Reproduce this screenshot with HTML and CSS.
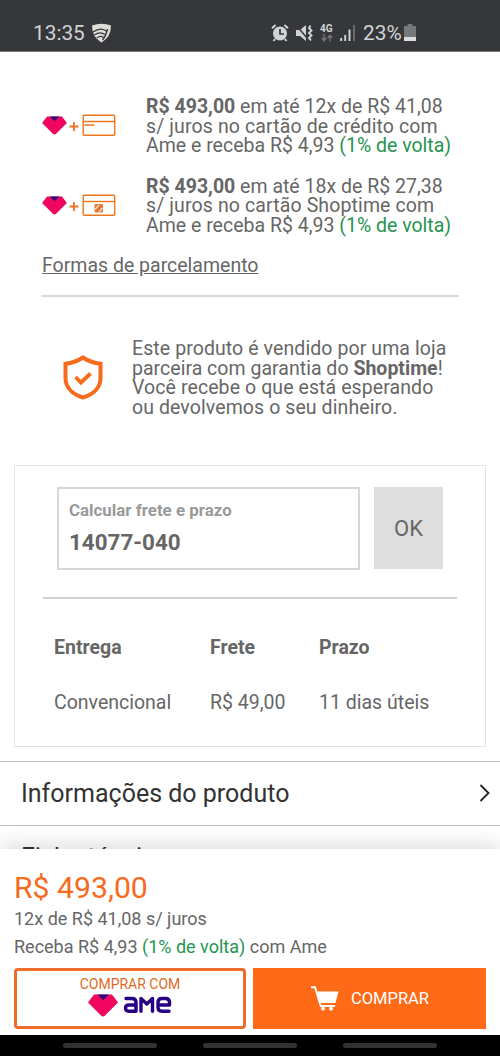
FILE: index.html
```html
<!DOCTYPE html>
<html lang="pt-BR">
<head>
<meta charset="utf-8">
<title>Shoptime</title>
<link rel="stylesheet" href="styles.css">
</head>
<body>
<svg class="defs" width="0" height="0" aria-hidden="true">
  <symbol id="gem" viewBox="0 0 30 23"><path d="M6 0.500H24L30 8.500 17 21.500Q15 23.500 13 21.500L0 8.500Z" fill="#f0055f"/><path d="M9.500 .500H21L15.200 6Z" fill="#2b0a80"/></symbol>
</svg>
<div class="screen">
  <header class="status">
    <span class="clock">13:35</span>
    <svg class="shield-wifi" width="21" height="20" viewBox="0 0 21 20"><path d="M1 2.500Q10.500-1 20 2.500 20 14 10.500 19.500 1 14 1 2.500Z" fill="#deded9"/><g fill="none" stroke="#36373b" stroke-width="1.300"><path d="M2 9Q10 3.500 16 8.500M3.500 12Q9 8 14 11.500M6 15Q9.500 12 12.500 14.500M16.500 6Q15 13 11.500 17"/></g></svg>
    <svg class="alarm" width="18" height="18" viewBox="0 0 18 18"><circle cx="9" cy="9.500" r="7" fill="#d2d3d5"/><path d="M1 4.200 4.600 1M17 4.200 13.400 1M4 15 2.500 17M14 15l1.500 2" stroke="#d2d3d5" stroke-width="2"/><path d="M9 5v5h4" fill="none" stroke="#36373b" stroke-width="1.700"/></svg>
    <svg class="mute" width="18" height="18" viewBox="0 0 18 18"><path d="M1 6h4l6-5v16l-6-5H1Z" fill="#d2d3d5"/><path d="M1 1 12 14" stroke="#36373b" stroke-width="1.500"/><path d="M15.500 1.500 14 4l2.500 2.500L14 9l2.500 2.500L14 14l2 2.500" fill="none" stroke="#d2d3d5" stroke-width="1.900"/></svg>
    <span class="network"><b>4G</b><svg width="12" height="8" viewBox="0 0 12 8"><path d="M3 0v6M.700 4 3 6.800 5.300 4M9 7.500v-6M6.700 4 9 1.200 11.300 4" fill="none" stroke="#77787c" stroke-width="1.300"/></svg></span>
    <svg class="signal" width="16" height="16" viewBox="0 0 16 16"><path d="M1.200 16v-3M5.200 16v-6M9.500 16V4.500" stroke="#d2d3d5" stroke-width="1.900"/><path d="M14 16V0" stroke="#6c6d71" stroke-width="1.900"/></svg>
    <span class="percent">23%</span>
    <svg class="battery" width="12" height="17" viewBox="0 0 12 17"><path d="M0 2h3.500V0h5v2H12v15H0Z" fill="#77787c"/><path d="M0 13h12v4H0Z" fill="#dedede"/></svg>
  </header>

  <main class="content">
    <section class="payments">
      <div class="payment">
        <svg class="pay-icon" width="75" height="24" viewBox="0 0 75 24"><use href="#gem" x="0" y="2" width="25" height="19"/><path d="M27.500 12.500h9M32 8v9" stroke="#ed741f" stroke-width="1.800"/><g fill="none" stroke="#ed741f" stroke-width="1.400"><rect x="41.200" y="1.200" width="31.500" height="20" rx="1"/><path d="M42 7.500h31M42.500 11h10"/></g></svg>
        <p><b>R$ 493,00</b> em até 12x de R$ 41,08<br><span class="loose">s/ juros no cartão de crédito com</span><br>Ame e receba R$ 4,93 <span class="green">(1% de volta)</span></p>
      </div>
      <div class="payment">
        <svg class="pay-icon" width="75" height="24" viewBox="0 0 75 24"><use href="#gem" x="0" y="2" width="25" height="19"/><path d="M27.500 12.500h9M32 8v9" stroke="#ed741f" stroke-width="1.800"/><g fill="none" stroke="#ed741f" stroke-width="1.400"><rect x="41.200" y="1.200" width="31.500" height="20" rx="1"/><path d="M42 7.500h31"/></g><rect x="52.500" y="10" width="8.500" height="8.500" rx="1" fill="#e07a38"/><path d="m53 15.500 4-4.500M57 18l3.500-4" stroke="#fff" stroke-width="1.100"/></svg>
        <p><b>R$ 493,00</b> em até 18x de R$ 27,38<br><span class="loose">s/ juros no cartão Shoptime com</span><br>Ame e receba R$ 4,93 <span class="green">(1% de volta)</span></p>
      </div>
      <a class="link">Formas de parcelamento</a>
    </section>

    <section class="guarantee">
      <svg width="40" height="45" viewBox="0 0 40 45"><path d="M20 2.500C15 6 9 8 2.500 8.800V23C2.500 33 10 39.500 20 42.500 30 39.500 37.500 33 37.500 23V8.800C31 8 25 6 20 2.500Z" fill="none" stroke="#f76b1c" stroke-width="4"/><path d="m12.500 22 5.500 5.500 9.500-9" fill="none" stroke="#f76b1c" stroke-width="3.800"/></svg>
      <p>Este produto é vendido por uma loja<br><span class="tight">parceira com garantia do <b>Shoptime</b>!</span><br>Você recebe o que está esperando<br>ou devolvemos o seu dinheiro.</p>
    </section>

    <section class="shipping">
      <form class="zip">
        <label class="field"><span class="caption">Calcular frete e prazo</span><span class="value">14077-040</span></label>
        <button class="ok" type="button">OK</button>
      </form>
      <div class="rates">
        <b>Entrega</b><b>Frete</b><b>Prazo</b>
        <span>Convencional</span><span>R$ 49,00</span><span>11 dias úteis</span>
      </div>
    </section>

    <section class="accordion">
      <div class="item"><span class="info">Informações do produto</span><svg width="12" height="18" viewBox="0 0 12 18"><path d="m1.500 1 8 8-8 8" fill="none" stroke="#222" stroke-width="1.800"/></svg></div>
      <div class="item next"><span>Ficha técnica</span></div>
    </section>
  </main>

  <footer class="buybar">
    <div class="price">R$ 493,00</div>
    <div class="parcel">12x de R$ 41,08 s/ juros</div>
    <div class="cashback">Receba R$ 4,93 <span class="green">(1% de volta)</span> com Ame</div>
    <div class="actions">
      <button class="ame" type="button"><span class="with">COMPRAR COM</span>
        <svg width="84" height="24" viewBox="0 0 84 24" role="img" aria-label="ame"><use href="#gem" x="0" y="0" width="30" height="23"/><g fill="none" stroke="#270085" stroke-width="3.400" stroke-linejoin="round" stroke-linecap="round"><path d="M38 4.500H44Q48 4.500 48 8.500V17.200H41Q37.500 17.200 37.500 14 37.500 11 41 11H47.500M53 17.200V4.500L58.800 10 64.500 4.500V17.200M70 11H81.500V8.500Q81.500 4.500 77.500 4.500H74Q70 4.500 70 8.500V13.200Q70 17.200 74 17.200H81"/></g></svg>
      </button>
      <button class="buy" type="button"><svg width="28" height="25" viewBox="0 0 28 25"><path d="M5.500 5.500H27.500L24.500 17H9.500Z" fill="#fff"/><path d="M0 1.300H4L9.700 20H24" fill="none" stroke="#fff" stroke-width="1.900"/><circle cx="12" cy="22.700" r="1.900" fill="#fff"/><circle cx="20" cy="22.700" r="1.900" fill="#fff"/></svg><span>COMPRAR</span></button>
    </div>
  </footer>
  <nav class="navbar"><i></i><i></i><i></i></nav>
</div>
</body>
</html>
```
FILE: styles.css
```css
* { box-sizing: border-box; }
body { margin: 0; font-family: Roboto, "Liberation Sans", sans-serif; color: #666; background: #fff; }
p { margin: 0; }
button { font: inherit; border: 0; padding: 0; margin: 0; }
svg { display: block; flex: none; }
.defs { position: absolute; }
.green { color: #249451; }
.screen { width: 500px; height: 1056px; display: flex; flex-direction: column; overflow: hidden; }
.status { height: 52px; flex: none; background: #36373b; border-bottom: 1px solid #77787a; padding: 14px 0 0 33px; display: flex; align-items: center; color: #d2d3d5; }
.clock { font-size: 20.800px; width: 58px; white-space: nowrap; }
.alarm { margin-left: 159px; }
.mute { margin-left: 6px; }
.network { margin-left: 7px; width: 14px; font-size: 10px; line-height: 10px; }
.network svg { margin-left: 1px; }
.signal { margin-left: 6px; }
.percent { font-size: 20.800px; margin-left: 7px; width: 41px; white-space: nowrap; }
.content { height: 797px; flex: none; overflow: hidden; }
.payments { margin: 0 41px; padding-top: 45px; height: 245px; border-bottom: 2px solid #d8d8d8; }
.payment { display: flex; margin-bottom: 21px; height: 58.500px; }
.payment p { font-size: 19.500px; line-height: 19.500px; margin-left: 29px; white-space: nowrap; }
.loose { letter-spacing: .12px; }
.pay-icon { margin: 17px 0 0 1px; }
.link { display: inline-block; margin-left: 1px; font-size: 19.500px; line-height: 20px; text-decoration: underline; }
.guarantee { display: flex; padding: 42px 0 0 63px; height: 168px; }
.guarantee svg { margin-top: 16px; }
.guarantee p { font-size: 19.500px; line-height: 19.500px; letter-spacing: .09px; margin-left: 29px; white-space: nowrap; }
.tight { letter-spacing: .02px; }
.shipping { margin: 0 14px; height: 282px; border: 1px solid #e3e3e3; padding: 21px 28px 0; }
.zip { display: flex; gap: 14px; padding: 0 0 0 14px; height: 112px; border-bottom: 2px solid #d2d2d2; margin: 0; }
.field { width: 303px; height: 83px; border: 2px solid #d6d6d6; padding: 11px 10px; display: flex; flex-direction: column; font-weight: 700; }
.caption { font-size: 16.900px; line-height: 20px; color: #999; }
.value { font-size: 22.400px; line-height: 26px; margin-top: 9px; }
.ok { width: 69px; height: 82px; background: #dedede; color: #666; font-size: 22px; }
.rates { display: grid; grid-template-columns: 156px 109px 1fr; row-gap: 31px; padding: 37px 0 0 11px; font-size: 19.500px; line-height: 24px; white-space: nowrap; }
.accordion { margin-top: 14px; font-size: 25px; color: #333; }
.item { height: 64px; border-top: 1px solid #c4c4c4; padding: 0 9px 1px 21px; display: flex; align-items: center; justify-content: space-between; }
.next { padding-bottom: 0; }
.buybar { position: relative; height: 186px; flex: none; background: #fff; box-shadow: 0 -2px 22px rgba(0,0,0,.17); padding: 22px 14px 0; font-size: 18px; }
.price { font-size: 30.200px; line-height: 34px; color: #f76b1c; }
.parcel { line-height: 28px; }
.cashback { line-height: 28px; }
.actions { display: flex; gap: 7px; margin-top: 7px; }
.ame { width: 232px; height: 61px; border: 3px solid #ed6c2b; border-radius: 4px; background: #fff; display: flex; flex-direction: column; align-items: center; }
.with { color: #e06a24; font-size: 14px; line-height: 15px; margin-top: 6px; }
.ame svg { margin-top: 2px; }
.buy { width: 233px; height: 61px; background: #ff6a17; color: #fff; display: flex; align-items: center; padding-left: 58px; font-size: 16.500px; }
.buy span { margin-left: 12px; }
.navbar { height: 21px; flex: none; background: #000; display: flex; align-items: center; justify-content: center; gap: 46px; }
.navbar i { width: 94px; height: 5px; border-radius: 3px; background: #343434; }
```
